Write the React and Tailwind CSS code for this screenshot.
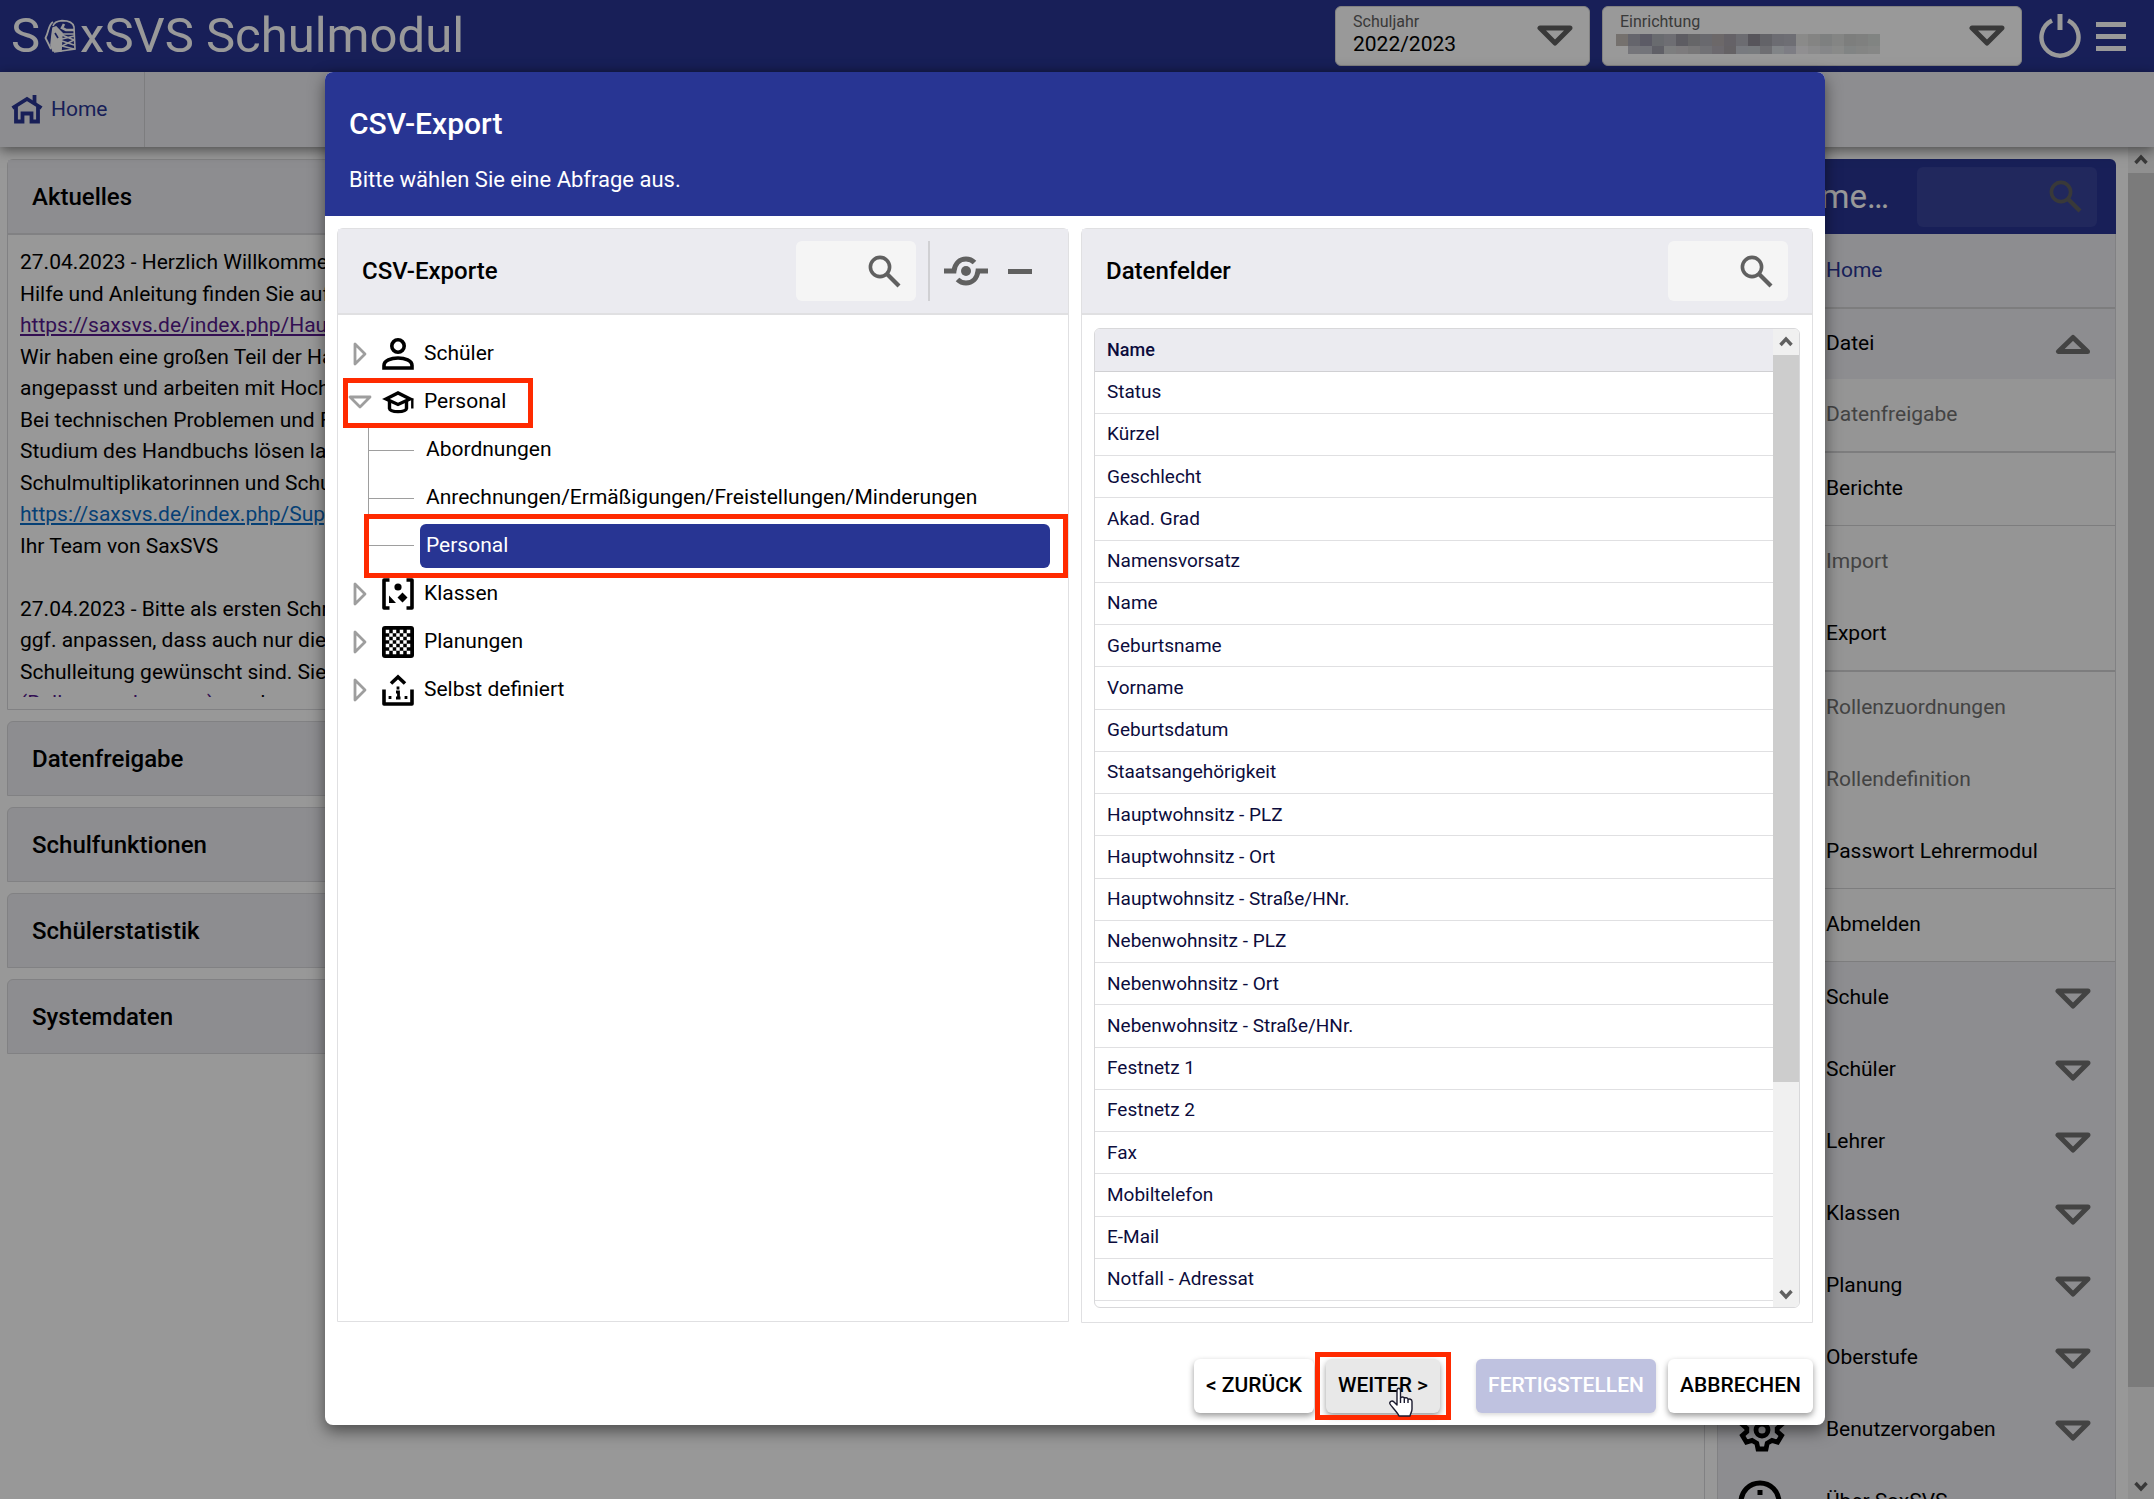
import React from "react";

function Tri({ className = "", up = false }) {
  return (
    <svg viewBox="0 0 36 21" className={"h-[21px] w-9 shrink-0 " + className} fill="none" stroke="currentColor" strokeWidth="5" strokeLinejoin="round">
      <path d={up ? "M3.5 17.5 H32.5 L18 3.5 Z" : "M3 3 H33 L18 18 Z"} />
    </svg>
  );
}

function SearchIcon({ className = "" }) {
  return (
    <svg viewBox="0 0 33 33" className={"h-[33px] w-[33px] " + className} fill="none" stroke="currentColor" strokeWidth="3.6">
      <circle cx="12" cy="12" r="9.6" />
      <path d="M18.5 18.5 L31 31" strokeWidth="4.2" />
    </svg>
  );
}

function HomeIcon() {
  return (
    <svg viewBox="0 0 32 30" className="h-[30px] w-8" fill="none" stroke="currentColor" strokeWidth="3.8">
      <path d="M1.5 13 L16 4 L30.500 13" />
      <path d="M5 11.500 V26.500 H11.500 V18.500 H20.500 V26.500 H27 V11.500" />
      <path d="M23.500 0 V8" />
    </svg>
  );
}

function Backpack() {
  return (
    <svg viewBox="0 0 32 34" className="h-[34px] w-8 shrink-0" fill="none" stroke="currentColor" strokeWidth="1.6">
      <path d="M9 7 C10 3 13 2 18 1.600 C24 1.600 29 3 30 8 L31 30 L10 33" />
      <path d="M9 9 L12 8 L16 12 L18 14 L17 32 L9 32 L7 26 L8 16 Z" fill="currentColor" />
      <path d="M9 3 C4 6 5 13 1.500 19 L7 30" strokeWidth="1.8" />
      <path d="M20 5 L18 9 L22 11 L30 11" strokeWidth="2.600" />
      <path d="M11 14 L14 19" stroke="#283593" strokeWidth="1.6" />
      <path d="M18 15 H30 M18 20 L30 17 M18 16 L30 21 M18 22 L30 26 M30 21 L18 27 M18 27 L30 30" strokeWidth="1.400" />
    </svg>
  );
}

function UserIcon() {
  return (
    <svg viewBox="0 0 32 32" className="h-8 w-8" fill="none" stroke="currentColor" strokeWidth="3.6">
      <circle cx="16" cy="8" r="6.2" />
      <path d="M2 30 V27.500 C2 22.500 9 20 16 20 C23 20 30 22.500 30 27.500 V30 Z" />
    </svg>
  );
}

function CapIcon() {
  return (
    <svg viewBox="0 0 32 32" className="h-8 w-8" fill="none" stroke="currentColor" strokeWidth="3.4">
      <path d="M4 13 L16 7 L28 13 L16 18.500 Z" />
      <path d="M7.500 15 V22.500 C8 25 11 25.600 16 25.600 C21 25.600 24 25 24.500 22.500 V15" />
      <path d="M30.300 12.500 V22.500" strokeWidth="2.4" />
    </svg>
  );
}

function ClassIcon() {
  return (
    <svg viewBox="0 0 32 32" className="h-8 w-8" fill="currentColor">
      <path d="M7.5 2 H2 V30 H7.5 M24.500 2 H30 V30 H24.500" fill="none" stroke="currentColor" strokeWidth="3.6" strokeLinejoin="round" />
      <circle cx="16" cy="9" r="3.600" />
      <path d="M7 17.500 V25 H14 Z M20.500 14.500 L25.500 19.500 L20.500 24.500 L15.500 19.500 Z" />
    </svg>
  );
}

function PlanIcon() {
  const cells = [];
  for (let r = 0; r < 7; r++) for (let c = 0; c < 7; c++) if ((r + c) % 2 === 0) cells.push([c, r]);
  return (
    <svg viewBox="0 0 32 32" className="h-8 w-8">
      <rect width="32" height="32" rx="3" fill="black" />
      {cells.map(([c, r]) => (
        <rect key={c + "-" + r} x={3.75 + c * 3.5} y={3.75 + r * 3.5} width="3.5" height="3.5" fill="white" />
      ))}
    </svg>
  );
}

function CustomIcon() {
  return (
    <svg viewBox="0 0 32 32" className="h-8 w-8" fill="none" stroke="currentColor" strokeWidth="3.6">
      <path d="M2 15.500 V30 H30 V15.500" strokeLinejoin="round" />
      <path d="M9 9.500 L16 3 L23 9.500" />
      <path d="M14 18 H16.500 V25 M16 12.500 V15.500 M8 22 V25 M24 22 V25 M14 24 H18.500" strokeWidth="2.800" />
    </svg>
  );
}

function SyncIcon() {
  return (
    <svg viewBox="0 0 44 30" className="h-[30px] w-11" fill="none" stroke="currentColor" strokeWidth="5">
      <path d="M0 15 H10 C11 7 16 3 22 3 C26 3 28.500 4.500 30.500 6.500" />
      <path d="M44 15 H34 C33 23 28 27 22 27 C18 27 15.500 25.500 13.500 23.500" />
      <circle cx="22" cy="15" r="5" fill="currentColor" stroke="none" />
    </svg>
  );
}

function ScrollChevron({ down = false }) {
  return (
    <svg viewBox="0 0 26 26" className="h-[26px] w-[26px] shrink-0 text-[#606060]" fill="none" stroke="currentColor" strokeWidth="3.4">
      <path d={down ? "M7.500 10 L13 16 L18.500 10" : "M7.500 16 L13 10 L18.500 16"} />
    </svg>
  );
}

function GearIcon() {
  return (
    <svg viewBox="0 0 24 24" className="h-12 w-12" fill="none" stroke="currentColor" strokeWidth="2.400">
      <circle cx="12" cy="12" r="3" />
      <path d="M10 2.500 H14 L14.600 5.400 L17 6.800 L19.800 5.900 L21.800 9.300 L19.600 11.200 V12.800 L21.800 14.700 L19.800 18.100 L17 17.200 L14.600 18.600 L14 21.500 H10 L9.400 18.600 L7 17.200 L4.200 18.100 L2.200 14.700 L4.400 12.800 V11.200 L2.200 9.300 L4.200 5.900 L7 6.800 L9.400 5.400 Z" />
    </svg>
  );
}

function InfoIcon() {
  return (
    <svg viewBox="0 0 44 44" className="h-11 w-11" fill="none" stroke="currentColor" strokeWidth="5">
      <circle cx="22" cy="22" r="19" />
      <path d="M22 10 V15 M22 19 V34" />
    </svg>
  );
}

function Hand() {
  return (
    <svg viewBox="0 0 26 30" className="pointer-events-none absolute top-7 left-[62px] h-[30px] w-[26px]" fill="white" stroke="#1a1a2e" strokeWidth="1.4" strokeLinejoin="round">
      <path d="M9 18 V3.500 C9 0.500 12.500 0.500 12.500 3.500 V11 C13 9.500 16 9.500 16.300 11.500 C17 10.300 19.800 10.500 20 12.500 C21 11.600 24 12 24 14.500 V22 C24 25 22.500 26 22 29 H11 C10 26 3 19 2 17 C1 14.500 4 13 6 15 Z" />
      <path d="M12.500 11 V16 M16.300 12 V16 M20 13 V16" />
    </svg>
  );
}

function RowArrow({ open }) {
  return open ? (
    <svg viewBox="0 0 24 14" className="h-[14px] w-6 text-[#9e9e9e]" fill="none" stroke="currentColor" strokeWidth="2.800" strokeLinejoin="round">
      <path d="M2 2 H22 L12 12 Z" />
    </svg>
  ) : (
    <svg viewBox="0 0 14 24" className="h-6 w-[14px] text-[#9e9e9e]" fill="none" stroke="currentColor" strokeWidth="2.800" strokeLinejoin="round">
      <path d="M2 2 V22 L12 12 Z" />
    </svg>
  );
}

function TreeNode({ icon, label, open = false, marked = false, children }) {
  return (
    <li>
      <div className="relative flex h-12 items-center">
        <button aria-label={label + " umschalten"} className="flex w-11 justify-center">
          <RowArrow open={open} />
        </button>
        <span className="w-[42px]">{icon}</span>
        <span>{label}</span>
        {marked && <div className="absolute top-0 left-[5px] h-[50px] w-[190px] border-[5px] border-[#ff2a00]" />}
      </div>
      {children}
    </li>
  );
}

const fields = ["Status", "Kürzel", "Geschlecht", "Akad. Grad", "Namensvorsatz", "Name", "Geburtsname", "Vorname", "Geburtsdatum", "Staatsangehörigkeit", "Hauptwohnsitz - PLZ", "Hauptwohnsitz - Ort", "Hauptwohnsitz - Straße/HNr.", "Nebenwohnsitz - PLZ", "Nebenwohnsitz - Ort", "Nebenwohnsitz - Straße/HNr.", "Festnetz 1", "Festnetz 2", "Fax", "Mobiltelefon", "E-Mail", "Notfall - Adressat"];

const sub = [
  { label: "Datenfreigabe", off: true, line: "h-[74px] border-b-2" },
  { label: "Berichte", line: "h-[73px] border-b" },
  { label: "Import", off: true, line: "h-[72px]" },
  { label: "Export", line: "h-[74px] border-b-2" },
  { label: "Rollenzuordnungen", off: true, line: "h-[72px]" },
  { label: "Rollendefinition", off: true, line: "h-[72px]" },
  { label: "Passwort Lehrermodul", line: "h-[73px] border-b" },
  { label: "Abmelden", line: "h-[73px] border-b" },
];

const groups = [
  { label: "Schule" },
  { label: "Schüler" },
  { label: "Lehrer" },
  { label: "Klassen" },
  { label: "Planung" },
  { label: "Oberstufe" },
  { label: "Benutzervorgaben", icon: <GearIcon /> },
];

function PanelHead({ title, id, children }) {
  return (
    <div className="flex h-[86px] shrink-0 items-center border-b-2 border-[#e0e0e2] bg-[#ebebf0] pl-6">
      <h3 className="mr-auto text-2xl font-medium">{title}</h3>
      <label htmlFor={id} className="flex h-[60px] w-[120px] items-center rounded-md bg-[#f5f5f5] pr-[15px] text-[#606060]">
        <input id={id} aria-label={title + " durchsuchen"} className="w-0 flex-1 bg-transparent outline-none" />
        <SearchIcon />
      </label>
      {children}
    </div>
  );
}

function HeaderField({ id, label, className, children }) {
  return (
    <div className={"relative flex h-[60px] flex-col justify-center rounded-md border border-[#d8d8d8] bg-white pl-[17px] text-[#606060] " + className}>
      <label htmlFor={id} className="text-base leading-4">{label}</label>
      {children}
      <Tri className="pointer-events-none absolute top-[18px] right-4" />
    </div>
  );
}

const mosaicTop = ["bg-[#c4bcb8]", "bg-[#a8a8b4]", "bg-[#9a98aa]", "bg-[#b0b2ba]", "bg-[#b8b8c0]", "bg-[#9c9aa4]", "bg-[#aaaaae]", "bg-[#b0b0b8]", "bg-[#b4aeb0]", "bg-[#a8a4ac]", "bg-[#b4b4bc]", "bg-[#918e98]", "bg-[#a6a6ae]", "bg-[#b4b4be]", "bg-[#b8b8c2]", "bg-[#e6e6e4]", "bg-[#dcdcda]", "bg-[#d2d6d6]", "bg-[#dcdedd]", "bg-[#d0d2d0]", "bg-[#d4d6d4]", "bg-[#d8dcd9]"];
const mosaicBottom = ["bg-white", "bg-[#c4c4cc]", "bg-[#c0c2cc]", "bg-[#a0a0ac]", "bg-[#d0d2d4]", "bg-[#d0ced0]", "bg-[#c8c6c8]", "bg-[#bcbcc4]", "bg-[#b4b0b8]", "bg-[#a8a4a8]", "bg-[#c8ccd4]", "bg-[#c8ced2]", "bg-[#b8b8be]", "bg-[#d8dce2]", "bg-[#d0d0dc]", "bg-[#f0eff2]", "bg-[#e8e8ea]", "bg-[#e0e2e4]", "bg-[#e4e6e4]", "bg-[#d8dcdc]", "bg-[#dcdedc]", "bg-[#e0e2e0]"];

export default function App() {
  return (
    <div className="relative h-screen overflow-hidden bg-[#fdfdfd] font-['Roboto',sans-serif] text-[21px] leading-normal text-black">
      <div className="flex h-full flex-col">
        <header className="flex h-[72px] shrink-0 items-center bg-[#283593] pr-7 pl-[11px] text-white">
          <h1 className="mr-auto flex items-center text-[49px]" aria-label="SaxSVS Schulmodul">
            <span>S</span>
            <span className="mx-1"><Backpack /></span>
            <span>xSVS Schulmodul</span>
          </h1>
          <HeaderField id="jahr" label="Schuljahr" className="w-[255px]">
            <select id="jahr" className="appearance-none bg-transparent text-[21px] leading-7 text-black">
              <option>2022/2023</option>
            </select>
          </HeaderField>
          <HeaderField id="einr" label="Einrichtung" className="ml-3 w-[420px]">
            <button id="einr" aria-label="Einrichtung wählen" className="-ml-1 flex h-7 flex-col justify-center">
              <span className="flex">
                {mosaicTop.map((c, i) => (
                  <span key={i} className={"h-3 w-3 " + c} />
                ))}
              </span>
              <span className="flex">
                {mosaicBottom.map((c, i) => (
                  <span key={i} className={"h-2 w-3 " + c} />
                ))}
              </span>
            </button>
          </HeaderField>
          <button aria-label="Abmelden" className="ml-[17px]">
            <svg viewBox="0 0 42 44" className="h-11 w-[42px]" fill="none" stroke="currentColor" strokeWidth="4.400">
              <path d="M13 6.500 A18.500 18.500 0 1 0 29 6.500" />
              <path d="M21 0 V16" strokeWidth="5" />
            </svg>
          </button>
          <button aria-label="Menü" className="ml-[15px] flex w-[30px] flex-col gap-[7px]">
            <span className="h-[5px] bg-white" />
            <span className="h-[5px] bg-white" />
            <span className="h-[5px] bg-white" />
          </button>
        </header>
        <nav className="z-10 flex h-[75px] shrink-0 bg-[#ebebf0] shadow-[0_3px_12px_rgba(0,0,0,0.5)]">
          <a href="#home" className="flex w-[145px] items-center gap-2 border-r border-[#d0d0d4] pl-[11px] text-[#283593]">
            <HomeIcon />
            Home
          </a>
        </nav>
        <div className="flex min-h-0 flex-1">
          <main className="flex flex-1 flex-col gap-[11px] pt-3 pr-3 pl-[7px]">
            <section className="flex h-[551px] shrink-0 flex-col rounded-t-md border border-[#d8d8da]">
              <h2 className="flex h-[75px] shrink-0 items-center border-b-2 border-[#d8d8da] bg-[#ebebf0] pl-6 text-2xl font-medium">Aktuelles</h2>
              <div className="my-3 overflow-hidden pl-3 whitespace-nowrap">
                <p>27.04.2023 - Herzlich Willkommen bei SaxSVS</p>
                <p>Hilfe und Anleitung finden Sie auf</p>
                <p><a href="#haupt" className="text-[#551a8b] underline">https://saxsvs.de/index.php/Hauptseite</a></p>
                <p>Wir haben eine großen Teil der Handbücher</p>
                <p>angepasst und arbeiten mit Hochdruck</p>
                <p>Bei technischen Problemen und Fragen</p>
                <p>Studium des Handbuchs lösen lassen</p>
                <p>Schulmultiplikatorinnen und Schulmultiplikatoren</p>
                <p><a href="#support" className="text-[#0b6cc4] underline">https://saxsvs.de/index.php/Support</a></p>
                <p>Ihr Team von SaxSVS</p>
                <p>&nbsp;</p>
                <p>27.04.2023 - Bitte als ersten Schritt</p>
                <p>ggf. anpassen, dass auch nur die</p>
                <p>Schulleitung gewünscht sind. Sie</p>
                <p><a href="#rollen" className="text-[#551a8b] underline">(Rollenzuordnungen)</a> werden</p>
              </div>
            </section>
            {["Datenfreigabe", "Schulfunktionen", "Schülerstatistik", "Systemdaten"].map((t) => (
              <h2 key={t} className="flex h-[75px] shrink-0 items-center rounded-t-md border border-[#d8d8da] bg-[#ebebf0] pl-6 text-2xl font-medium">{t}</h2>
            ))}
          </main>
          <div className="border-l border-[#d8d8da]" />
          <aside className="mr-3 ml-3 flex w-[399px] flex-col pt-3">
            <div className="flex h-[75px] shrink-0 items-center justify-end rounded-t-md bg-[#283593] pr-[19px] text-white">
              <h2 className="mr-7 text-[33px]">Home…</h2>
              <label htmlFor="menusuche" className="flex h-[60px] w-[180px] items-center rounded-md bg-[#37439b] pr-[15px] text-[#606060]">
                <input id="menusuche" aria-label="Menü durchsuchen" className="w-0 flex-1 bg-transparent outline-none" />
                <SearchIcon />
              </label>
            </div>
            <ul className="border-x border-[#d8d8da] bg-[#ebebf0]">
              <li className="flex h-[75px] items-center border-b-2 border-[#d0d0d3] pl-[108px] text-[#283593]">Home</li>
              <li className="flex h-[70px] items-center justify-between pr-6 pl-[108px]">Datei <Tri up className="text-[#707070]" /></li>
              {sub.map((s) => (
                <li key={s.label} className={"flex items-center border-[#d0d0d3] bg-[#f8f8f8] pl-[108px] " + s.line + (s.off ? " text-[#707070]" : "")}>{s.label}</li>
              ))}
              {groups.map((g) => (
                <li key={g.label} className="flex h-[72px] items-center pr-6 pl-5">
                  <span className="w-[88px]">{g.icon}</span>
                  <span className="flex-1">{g.label}</span>
                  <Tri className="text-[#707070]" />
                </li>
              ))}
              <li className="flex h-[72px] items-center pl-5"><span className="w-[88px]"><InfoIcon /></span>Über SaxSVS</li>
            </ul>
          </aside>
          <div className="flex w-[26px] flex-col bg-[#f0f0f0]">
            <ScrollChevron />
            <div className="h-[1214px] shrink bg-[#cdcdcd]" />
            <div className="mt-auto"><ScrollChevron down /></div>
          </div>
        </div>
      </div>

      <div className="absolute inset-0 z-20 flex justify-center bg-black/40 pt-[72px] pr-1">
        <div role="dialog" aria-label="CSV-Export" className="flex h-[1353px] w-[1500px] flex-col overflow-hidden rounded-lg bg-white shadow-[0_6px_16px_rgba(0,0,0,0.5)]">
          <div className="h-36 shrink-0 bg-[#283593] pt-8 pl-6 text-white">
            <h2 className="text-[30px] leading-10 font-medium">CSV-Export</h2>
            <p className="mt-5 text-[22px] leading-8">Bitte wählen Sie eine Abfrage aus.</p>
          </div>
          <div className="flex flex-1 gap-3 p-3 pb-0">
            <section className="flex h-[1094px] flex-1 flex-col rounded-t-md border border-[#e0e0e2]">
              <PanelHead title="CSV-Exporte" id="such1">
                <span className="mr-[14px] ml-3 h-[60px] w-0.5 bg-[#d0d0d3]" />
                <button aria-label="Synchronisieren" className="text-[#606060]"><SyncIcon /></button>
                <button aria-label="Alle schließen" className="mr-9 ml-5 h-[5px] w-6 bg-[#606060]" />
              </PanelHead>
              <ul className="pt-[15px]">
                <TreeNode icon={<UserIcon />} label="Schüler" />
                <TreeNode icon={<CapIcon />} label="Personal" open marked>
                  <ul className="ml-[30px]">
                    {["Abordnungen", "Anrechnungen/Ermäßigungen/Freistellungen/Minderungen"].map((t) => (
                      <li key={t} className="flex h-12 items-center border-l border-[#9e9e9e]">
                        <span className="mr-3 h-px w-[45px] bg-[#9e9e9e]" />
                        {t}
                      </li>
                    ))}
                    <li className="relative flex h-12 items-center pr-[18px]">
                      <span className="-mt-6 h-6 w-[46px] border-b border-l border-[#9e9e9e]" />
                      <button className="ml-[6px] h-11 flex-1 rounded-md bg-[#283593] pl-[6px] text-left text-white">Personal</button>
                      <div className="absolute -top-2 right-0 -left-1 h-16 border-[5px] border-[#ff2a00]" />
                    </li>
                  </ul>
                </TreeNode>
                <TreeNode icon={<ClassIcon />} label="Klassen" />
                <TreeNode icon={<PlanIcon />} label="Planungen" />
                <TreeNode icon={<CustomIcon />} label="Selbst definiert" />
              </ul>
            </section>
            <section className="flex h-[1095px] flex-1 flex-col rounded-t-md border border-[#e0e0e2]">
              <PanelHead title="Datenfelder" id="such2">
                <span className="w-6" />
              </PanelHead>
              <div className="mx-3 mt-[13px] flex h-[980px] overflow-hidden rounded-md border border-[#d8d8da]">
                <div className="flex-1">
                  <table className="h-[972px] w-full border-collapse text-left text-[19px] leading-6 text-[#0c0c3c]">
                    <thead>
                      <tr className="h-[42px] border-b border-[#d0d0d3] bg-[#ebebf0]"><th className="h-[42px] pl-3 text-lg leading-6 font-medium">Name</th></tr>
                    </thead>
                    <tbody>
                      {fields.map((f) => (
                        <tr key={f} className="border-b border-[#e0e0e2]"><td className="pl-3">{f}</td></tr>
                      ))}
                    </tbody>
                  </table>
                </div>
                <div className="flex w-[26px] flex-col bg-[#f0f0f0]">
                  <ScrollChevron />
                  <div className="h-[727px] bg-[#cdcdcd]" />
                  <div className="mt-auto"><ScrollChevron down /></div>
                </div>
              </div>
            </section>
          </div>
          <div className="flex justify-end px-3 pb-3 font-medium">
            <button className="h-[54px] w-[120px] rounded-md bg-white shadow-[0_3px_6px_rgba(0,0,0,0.4)]">&lt; ZURÜCK</button>
            <div className="relative ml-3">
              <button className="h-[54px] w-[114px] rounded-md bg-[#e8e8e8] shadow-[0_3px_6px_rgba(0,0,0,0.4)]">WEITER &gt;</button>
              <div className="absolute -inset-x-[11px] -inset-y-[7px] border-[5px] border-[#ff2a00]" />
              <Hand />
            </div>
            <button disabled className="ml-9 h-[54px] w-[180px] rounded-md bg-[#bfc2e0] text-white shadow-[0_2px_4px_rgba(0,0,0,0.15)]">FERTIGSTELLEN</button>
            <button className="ml-3 h-[54px] w-[145px] rounded-md bg-white shadow-[0_3px_6px_rgba(0,0,0,0.4)]">ABBRECHEN</button>
          </div>
        </div>
      </div>
    </div>
  );
}
